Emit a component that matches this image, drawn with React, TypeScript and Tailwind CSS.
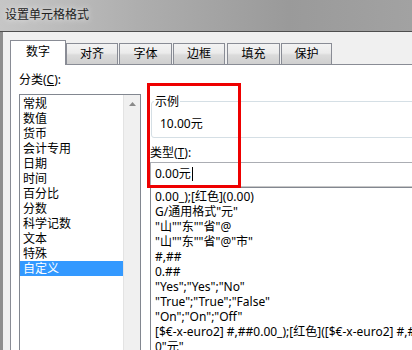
const CATEGORIES = ['常规', '数值', '货币', '会计专用', '日期', '时间', '百分比', '分数', '科学记数', '文本', '特殊', '自定义']

const FORMATS = [
  '0.00_);[红色](0.00)',
  'G/通用格式"元"',
  '"山""东""省"@',
  '"山""东""省"@"市"',
  '#,##',
  '0.##',
  '"Yes";"Yes";"No"',
  '"True";"True";"False"',
  '"On";"On";"Off"',
  '[$€-x-euro2] #,##0.00_);[红色]([$€-x-euro2] #,##0.00)',
  '0"元"',
]

const TABS = [
  { label: '对齐', cls: 'w-[52px] ml-0' },
  { label: '字体', cls: 'w-[53px] ml-[1px]' },
  { label: '边框', cls: 'w-[52px] ml-[1px]' },
  { label: '填充', cls: 'w-[53px] ml-[2px]' },
  { label: '保护', cls: 'w-[51px] ml-[1px]' },
]

const FONT = "font-['Noto_Sans','Noto_Sans_CJK_SC',sans-serif]"

export default function App() {
  return (
    <div className={`relative w-[412px] h-[350px] overflow-hidden bg-[#8e8e8e] text-[12px] text-black ${FONT}`}>
      {/* Title bar */}
      <div className="h-[31px] flex items-center pl-[5px] pb-[1px] bg-[linear-gradient(to_right,#c6c6c6,#adadad_35%,#9a9a9a_70%,#a2a2a2)]">
        <span className="text-[12px] text-[#1e1e1e] [text-shadow:0_0_6px_rgba(255,255,255,0.9)]">设置单元格格式</span>
      </div>
      <div className="h-px bg-[#4e4e4e]" />

      {/* Client */}
      <div className="ml-[3px] h-[318px] bg-[#f0f0f0] pl-[7px] pt-[8px] flex flex-col">
        {/* Tabs */}
        <div className="flex items-end h-[24px] relative z-10">
          <div className="w-[56px] h-[25px] -mb-px bg-white border border-b-0 border-[#898c95] flex items-center justify-center pb-[2px]">
            数字
          </div>
          {TABS.map(t => (
            <div
              key={t.label}
              className={`${t.cls} h-[21px] border border-b-0 border-[#898c95] bg-[linear-gradient(to_bottom,#f3f3f3,#ebebeb_45%,#dbdbdb_55%,#cfcfcf)] flex items-center justify-center`}
            >
              {t.label}
            </div>
          ))}
        </div>

        {/* Panel */}
        <div className="w-[700px] flex-1 bg-white border border-[#898c95] flex pl-[8px] pt-[7px]">
          {/* Category column */}
          <div className="w-[122px] flex flex-col shrink-0">
            <div className="h-[22px] leading-[15px]">
              分类(<span className="underline">C</span>):
            </div>
            <div className="flex-1 border border-[#828790] flex">
              <div className="flex-1 pt-[1px]">
                {CATEGORIES.map(c => (
                  <div
                    key={c}
                    className={`h-[15px] leading-[15px] pl-[3px] ${c === '自定义' ? 'bg-[#3399ff] text-white' : ''}`}
                  >
                    {c}
                  </div>
                ))}
              </div>
              <div className="w-[17px] bg-[#f0f0f0] border-l border-[#e3e3e3] flex justify-center pt-[7px]">
                <svg width="7" height="4" viewBox="0 0 7 4">
                  <path d="M0 4 L3.5 0 L7 4 Z" fill="#8a8a8a" />
                </svg>
              </div>
            </div>
          </div>

          {/* Right column */}
          <div className="ml-[9px] flex-1 flex flex-col pt-[22px]">
            <fieldset className="ml-[1px] h-[44px] border border-[#d5dfe5] rounded-[3px] pl-[2px]">
              <legend className="px-[1px] leading-[15px]">示例</legend>
              <div className="leading-[15px] mt-[7px] ml-[6px]">10.00元</div>
            </fieldset>
            <div className="mt-[7px] leading-[15px] h-[17px]">
              类型(<span className="underline">T</span>):
            </div>
            <div className="h-[25px] border border-[#abadb3] border-b-[#c8c8c8] flex items-center pl-[4px] pb-[1px]">
              <span>0.00元</span>
              <span className="w-px h-[14px] bg-black ml-[1px]" />
            </div>
            <div className="flex-1 border border-[#828790] pt-[1px] pl-[4px] whitespace-nowrap">
              {FORMATS.map(f => (
                <div key={f} className="h-[15px] leading-[15px]">
                  {f}
                </div>
              ))}
            </div>
          </div>
        </div>
      </div>

      {/* Red highlight annotation */}
      <div className="absolute left-[147px] top-[83px] w-[94px] h-[105px] border-[3px] border-[#ee0000]" />
    </div>
  )
}
